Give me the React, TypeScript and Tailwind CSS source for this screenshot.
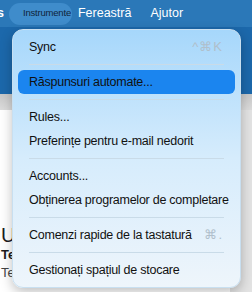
import type { ReactNode } from 'react'

const font = { fontFamily: '"Liberation Sans", Arial, sans-serif' }

function Sep() {
  return <div className="mx-[16px] my-[5px] h-px bg-[#c9dbe8]" />
}

function Item({ label, shortcut, active }: { label: string; shortcut?: ReactNode; active?: boolean }) {
  return (
    <div
      className={`mx-[5px] flex h-[24px] items-center justify-between rounded-[6px] pl-[11px] pr-[12px] text-[12.5px] tracking-[-0.25px] text-[#111] ${
        active ? 'bg-[#1b85ef]' : ''
      }`}
    >
      <span className="whitespace-nowrap">{label}</span>
      {shortcut && <span className="text-[13px] tracking-[1px] text-[#b0bfcb]">{shortcut}</span>}
    </div>
  )
}

export default function App() {
  return (
    <div className="relative h-[292px] w-[252px] overflow-hidden bg-white" style={font}>
      {/* Menu bar */}
      <div className="flex h-[27px] items-center bg-[#2b78b8] text-[12.5px] text-white">
        <span className="-ml-[3px] w-[12px] font-bold">s</span>
        <span className="flex h-[22px] items-center rounded-full bg-[#3f8ccb] pl-[14px] pr-[1px] text-[9.5px] tracking-[-0.2px] text-[#10253a]">
          Instrumente
        </span>
        <span className="ml-[6px]">Fereastră</span>
        <span className="ml-[19px]">Ajutor</span>
      </div>

      {/* Toolbar area */}
      <div className="h-[67px] bg-[#1c68ab]" />
      <div className="h-[16px] bg-gradient-to-b from-[#c8c8c8] to-[#dcdcdc]" />

      {/* Content behind */}
      <div className="flex">
        <div className="flex-1 pt-[114px] pl-[1px] text-[13px] text-[#1c1c1e]">
          <div className="text-[20px] leading-[22px]">U</div>
          <div className="font-bold leading-[18px]">Te</div>
          <div className="leading-[18px] text-[#444]">Te</div>
          <div className="mt-[10px] h-px bg-[#ddd]" />
          <div className="mt-[4px] font-bold">Microsoft Outlook Comp</div>
        </div>
        <div className="w-[22px] bg-[#e3e3e3]" />
      </div>

      {/* Dropdown menu */}
      <div className="absolute left-[12px] top-[29px] w-[229px] rounded-[11px] border border-[#c8dff0] bg-gradient-to-b from-[#a6d7fb] via-[#d6ecfc] to-[#eef5fb] py-[5px] shadow-[0_4px_12px_rgba(0,0,0,0.25)]">
        <Item label="Sync" shortcut="^⌘K" />
        <Sep />
        <Item label="Răspunsuri automate..." active />
        <Sep />
        <Item label="Rules..." />
        <Item label="Preferințe pentru e-mail nedorit" />
        <Sep />
        <Item label="Accounts..." />
        <Item label="Obținerea programelor de completare" />
        <Sep />
        <Item label="Comenzi rapide de la tastatură" shortcut="⌘." />
        <Sep />
        <Item label="Gestionați spațiul de stocare" />
      </div>
    </div>
  )
}
